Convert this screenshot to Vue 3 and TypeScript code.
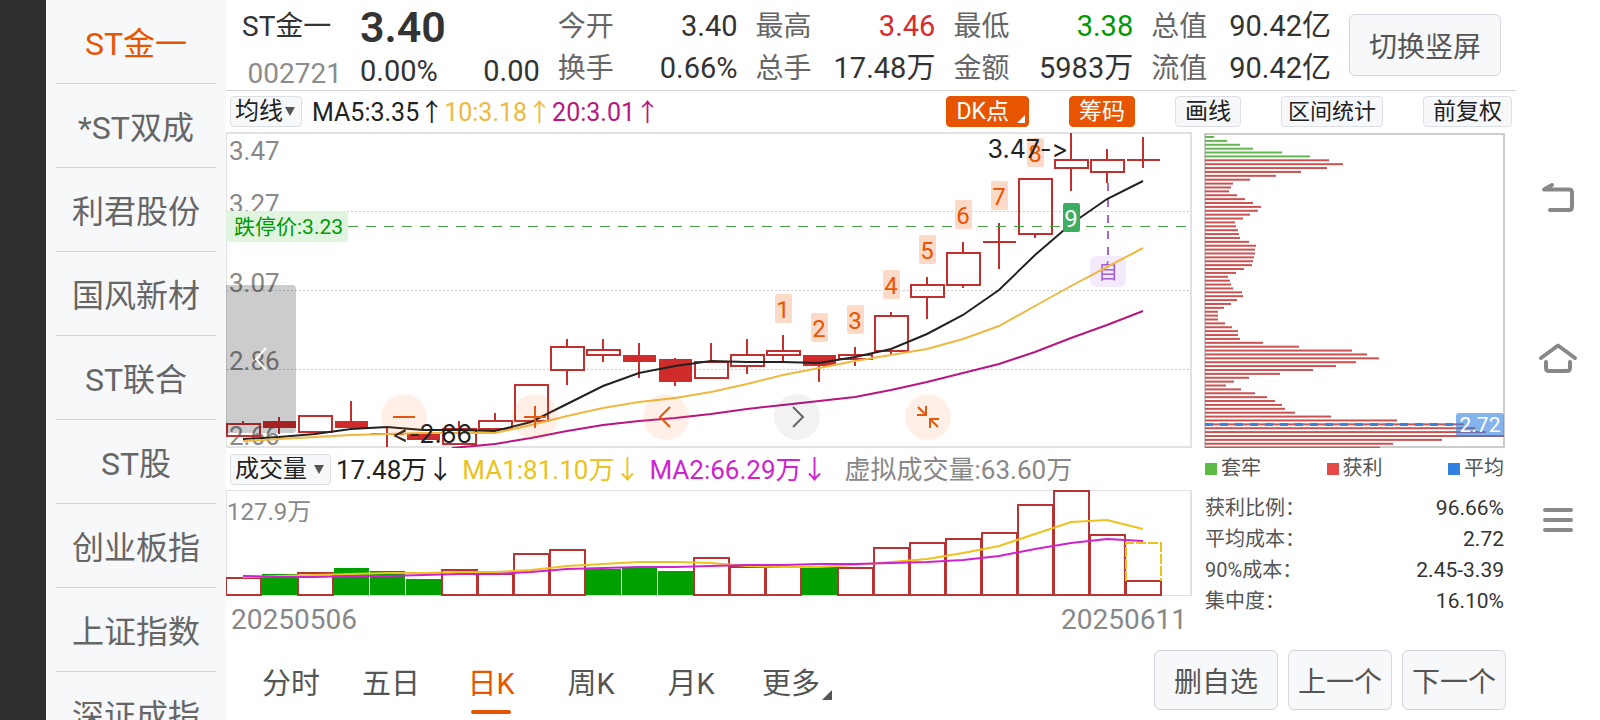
<script setup lang="ts">
import { ref } from 'vue'

type Kind = 'hollow' | 'solid' | 'cross'
type Candle = [kind: Kind, top: number, bottom: number, high: number, low: number]

const stocks = ['ST金一', '*ST双成', '利君股份', '国风新材', 'ST联合', 'ST股', '创业板指', '上证指数', '深证成指']
const activeStock = ref('ST金一')

const stats = [
  { rows: [{ label: '今开', value: '3.40', tone: '' }, { label: '换手', value: '0.66%', tone: '' }] },
  { rows: [{ label: '最高', value: '3.46', tone: 'up' }, { label: '总手', value: '17.48万', tone: '' }] },
  { rows: [{ label: '最低', value: '3.38', tone: 'down' }, { label: '金额', value: '5983万', tone: '' }] },
  { rows: [{ label: '总值', value: '90.42亿', tone: '' }, { label: '流值', value: '90.42亿', tone: '' }] },
]

const periods = ['分时', '五日', '日K', '周K', '月K', '更多']
const activePeriod = ref('日K')

const STEP = 36
const cx = (i: number): number => 17 + STEP * i
const toPoints = (ys: number[], first = 0): string => ys.map((y, i) => `${cx(i + first)},${y}`).join(' ')

const candles: Candle[] = [
  ['hollow', 292, 304, 289, 304], ['solid', 289, 296, 285, 302], ['hollow', 284, 300, 284, 303],
  ['solid', 289, 296, 269, 296], ['cross', 302, 302, 296, 315], ['solid', 301, 308, 301, 308],
  ['hollow', 297, 312, 289, 312], ['hollow', 289, 297, 281, 297], ['hollow', 253, 289, 253, 289],
  ['hollow', 215, 238, 207, 253], ['hollow', 218, 223, 207, 230], ['solid', 223, 230, 211, 246],
  ['solid', 227, 250, 226, 254], ['hollow', 230, 246, 211, 246], ['hollow', 223, 234, 207, 242],
  ['hollow', 219, 223, 203, 230], ['solid', 223, 234, 223, 250], ['hollow', 223, 227, 215, 234],
  ['hollow', 184, 219, 180, 222], ['hollow', 153, 165, 145, 187], ['hollow', 121, 153, 110, 156],
  ['cross', 110, 110, 91, 137], ['hollow', 47, 102, 47, 106], ['hollow', 28, 36, 1, 59],
  ['hollow', 28, 40, 17, 51], ['cross', 28, 28, 5, 36],
]

const ma5 = toPoints([307, 305, 302, 297, 295, 298, 298, 299, 290, 272, 254, 241, 234, 229, 230, 230, 231, 225, 217, 202, 183, 158, 123, 92, 67, 49])
const ma10 = toPoints([309, 307, 305, 303, 302, 301, 301, 301, 293, 284, 276, 270, 266, 260, 252, 243, 236, 229, 223, 217, 207, 194, 174, 154, 135, 116])
const ma20 = `226,316 ${toPoints([312, 306, 299, 293, 289, 286, 282, 277, 273, 269, 265, 258, 250, 241, 232, 220, 206, 193, 179], 7)}`

const badges = [
  { n: 1, i: 15, y: 162 }, { n: 2, i: 16, y: 181 }, { n: 3, i: 17, y: 173 }, { n: 4, i: 18, y: 138 },
  { n: 5, i: 19, y: 103 }, { n: 6, i: 20, y: 68 }, { n: 7, i: 21, y: 49 }, { n: 8, i: 22, y: 6 },
]

const axis = [
  { text: '3.47', y: 28 }, { text: '3.27', y: 81 }, { text: '3.07', y: 160 },
  { text: '2.86', y: 238 }, { text: '2.66', y: 313 },
]

const volumeTops = [88, 84, 83, 78, 81, 89, 80, 84, 64, 60, 79, 78, 81, 68, 77, 77, 77, 78, 58, 53, 49, 43, 15, 1, 45, 91]
const fallingDays = new Set([1, 3, 4, 5, 10, 11, 12, 16])
const volMa1 = toPoints([87, 86, 85, 84, 83, 83, 82, 82, 80, 76, 74, 72, 72, 73, 76, 77, 77, 75, 72, 69, 63, 56, 44, 32, 30, 39])
const volMa2 = toPoints([86, 87, 87, 86, 86, 85, 84, 84, 82, 79, 78, 77, 77, 76, 75, 75, 74, 74, 73, 72, 70, 66, 59, 53, 49, 51])

const CHIP_GAP = 3.883
const chips = [
  9, 22, 35, 48, 77, 105, 124, 138, 122, 96, 71, 45, 28, 26, 24, 32, 40, 48, 56, 53, 45, 38, 30, 31, 33, 34, 35,
  44, 51, 50, 50, 49, 48, 47, 39, 31, 23, 25, 26, 28, 37, 38, 32, 26, 19, 13, 13, 13, 20, 27, 33, 33, 35, 58, 94,
  147, 162, 174, 151, 131, 108, 75, 44, 29, 21, 36, 50, 62, 70, 77, 80, 90, 126, 192, 259, 270, 281, 299, 237, 188, 175,
]

const chipLegend = [
  { label: '套牢', tone: 'trapped' }, { label: '获利', tone: 'profit' }, { label: '平均', tone: 'average' },
]
const chipRows = [
  ['获利比例：', '96.66%'], ['平均成本：', '2.72'], ['90%成本：', '2.45-3.39'], ['集中度：', '16.10%'],
]
</script>

<template>
  <div class="screen" lang="zh-CN">
    <div class="bezel"></div>

    <nav class="watchlist" aria-label="自选">
      <button
        v-for="s in stocks" :key="s" type="button" class="stock"
        :class="{ active: s === activeStock }" @click="activeStock = s"
      >{{ s }}</button>
    </nav>

    <main class="main">
      <header class="quote">
        <div class="name-col">
          <h1 class="name">ST金一</h1>
          <span class="code">002721</span>
        </div>
        <div class="price-col">
          <strong class="price">3.40</strong>
          <div class="change"><span>0.00%</span><span>0.00</span></div>
        </div>
        <dl v-for="(c, k) in stats" :key="k" class="stat">
          <div v-for="r in c.rows" :key="r.label" class="stat-row">
            <dt>{{ r.label }}</dt><dd :class="r.tone">{{ r.value }}</dd>
          </div>
        </dl>
        <button type="button" class="soft-btn rotate">切换竖屏</button>
      </header>

      <div class="toolbar">
        <label class="picker">
          <select aria-label="主图指标"><option>均线</option></select>
          <svg class="caret" viewBox="0 0 10 9"><path d="M0 0H10L5 9Z" /></svg>
        </label>
        <span class="ma c-black">MA5:3.35↑</span>
        <span class="ma c-amber">10:3.18↑</span>
        <span class="ma c-magenta">20:3.01↑</span>
        <div class="tools">
          <button type="button" class="tool hot dk">DK点<svg class="corner" viewBox="0 0 8 8"><path d="M8 0V8H0Z" /></svg></button>
          <button type="button" class="tool hot">筹码</button>
          <button type="button" class="tool">画线</button>
          <button type="button" class="tool compact">区间统计</button>
          <button type="button" class="tool">前复权</button>
        </div>
      </div>

      <div class="panels">
        <section class="left">
          <div class="kline">
            <svg viewBox="0 0 966 316" role="img" aria-label="日K线图">
              <rect class="frame" x="0" y="1" width="965" height="314" />
              <line v-for="y in [79, 158, 237]" :key="y" class="grid" x1="1" x2="964" :y1="y + 0.5" :y2="y + 0.5" />
              <text v-for="a in axis" :key="a.text" class="axis" x="3" :y="a.y">{{ a.text }}</text>
              <g v-for="(c, i) in candles" :key="i" class="candle">
                <line v-if="c[3] < c[1]" :x1="cx(i)" :x2="cx(i)" :y1="c[3]" :y2="c[1]" />
                <line v-if="c[4] > c[2]" :x1="cx(i)" :x2="cx(i)" :y1="c[2]" :y2="c[4]" />
                <line v-if="c[0] === 'cross'" :x1="cx(i) - 16" :x2="cx(i) + 17" :y1="c[1]" :y2="c[1]" />
                <rect v-else-if="c[0] === 'solid'" class="fill" :x="cx(i) - 16" :y="c[1]" width="33" :height="c[2] - c[1]" />
                <rect v-else :x="cx(i) - 16" :y="c[1]" width="33" :height="c[2] - c[1]" />
              </g>
              <line class="limit" x1="122" x2="964" y1="94.5" y2="94.5" />
              <rect class="limit-tag" x="0" y="79" width="122" height="31" rx="3" />
              <text class="limit-text" x="8" y="102">跌停价:3.23</text>
              <line class="own-line" x1="882" x2="882" y1="51" y2="130" />
              <rect class="own-tag" x="864" y="124" width="36" height="31" rx="6" />
              <text class="own-text" x="882" y="147">自</text>
              <g v-for="b in badges" :key="b.n" class="badge">
                <rect :x="cx(b.i) - 8" :y="b.y" width="17" height="29" rx="2" />
                <text :x="cx(b.i)" :y="b.y + 24">{{ b.n }}</text>
              </g>
              <polyline class="line s-black" :points="ma5" />
              <polyline class="line s-amber" :points="ma10" />
              <polyline class="line s-magenta" :points="ma20" />
              <g class="badge nine">
                <rect :x="cx(23) - 8" y="71" width="17" height="29" rx="2" />
                <text :x="cx(23)" y="95">9</text>
              </g>
              <text class="mark" x="842" y="26" text-anchor="end">3.47-&gt;</text>
              <text class="mark" x="166" y="311">&lt;-2.66</text>
            </svg>
            <button type="button" class="drawer" aria-label="展开">
              <svg viewBox="0 0 12 24"><path d="M11 1L1 12L11 23" /></svg>
            </button>
            <div class="controls">
              <button type="button" class="round" aria-label="缩小"><svg viewBox="0 0 46 46"><path d="M12 23H34" /></svg></button>
              <button type="button" class="round" aria-label="放大"><svg viewBox="0 0 46 46"><path d="M12 23H34M23 12V34" /></svg></button>
              <button type="button" class="round" aria-label="左移"><svg viewBox="0 0 46 46"><path d="M27 13L17 23L27 33" /></svg></button>
              <button type="button" class="round gray" aria-label="右移"><svg viewBox="0 0 46 46"><path d="M19 13L29 23L19 33" /></svg></button>
              <button type="button" class="round" aria-label="收起"><svg viewBox="0 0 46 46"><path d="M13 13L21 21M12 21H21V12M33 33L25 25M34 25H25V34" /></svg></button>
            </div>
          </div>

          <div class="vol-legend">
            <label class="picker wide">
              <select aria-label="副图指标"><option>成交量</option></select>
              <svg class="caret" viewBox="0 0 10 9"><path d="M0 0H10L5 9Z" /></svg>
            </label>
            <span class="vol c-black">17.48万↓</span>
            <span class="vol c-gold">MA1:81.10万↓</span>
            <span class="vol c-violet">MA2:66.29万↓</span>
            <span class="vol forecast c-gray">虚拟成交量:63.60万</span>
          </div>

          <svg class="volume" viewBox="0 0 966 106" role="img" aria-label="成交量图">
            <rect class="frame" x="0" y="0" width="965" height="106" />
            <text class="axis small" x="1" y="30">127.9万</text>
            <g v-for="(t, i) in volumeTops" :key="i">
              <rect v-if="fallingDays.has(i)" class="vol-down" :x="36 * i" :y="t" width="35" :height="105 - t" />
              <rect v-else class="vol-up" :x="36 * i" :y="t" width="35" :height="105 - t" />
            </g>
            <path class="virtual" d="M900 91V53H935V91" />
            <polyline class="line s-gold" :points="volMa1" />
            <polyline class="line s-violet" :points="volMa2" />
          </svg>
          <div class="dates"><time datetime="2025-05-06">20250506</time><time datetime="2025-06-11">20250611</time></div>
        </section>

        <section class="right">
          <svg class="chips" viewBox="0 0 302 316" role="img" aria-label="筹码分布">
            <rect class="chip-frame" x="1" y="2" width="299" height="313" />
            <rect
              v-for="(w, i) in chips" :key="i" :class="i < 6 ? 'chip-trapped' : 'chip-profit'"
              x="1" :y="4 + CHIP_GAP * i" :width="w" height="2"
            />
            <line class="avg" x1="1" x2="252" y1="292.5" y2="292.5" />
            <rect class="avg-tag" x="252" y="281" width="48" height="24" rx="3" />
            <text class="avg-text" x="276" y="300">2.72</text>
          </svg>
          <ul class="chip-legend">
            <li v-for="l in chipLegend" :key="l.label"><i :class="l.tone"></i>{{ l.label }}</li>
          </ul>
          <dl class="chip-stats">
            <div v-for="r in chipRows" :key="r[0]"><dt>{{ r[0] }}</dt><dd>{{ r[1] }}</dd></div>
          </dl>
        </section>
      </div>

      <footer class="bottom">
        <nav class="tabs" aria-label="周期">
          <button
            v-for="p in periods" :key="p" type="button" class="tab"
            :class="{ active: p === activePeriod }" @click="activePeriod = p"
          >{{ p }}<svg v-if="p === '更多'" class="more" viewBox="0 0 10 10"><path d="M10 0V10H0Z" /></svg></button>
        </nav>
        <div class="actions">
          <button type="button" class="soft-btn action wide">删自选</button>
          <button type="button" class="soft-btn action">上一个</button>
          <button type="button" class="soft-btn action">下一个</button>
        </div>
      </footer>
    </main>

    <nav class="system" aria-label="系统导航">
      <button type="button" aria-label="返回"><svg viewBox="0 0 40 40"><path d="M14 5L6 9.500H31Q34 9.500 34 12.500V27Q34 30 31 30H12" /></svg></button>
      <button type="button" aria-label="主页"><svg viewBox="0 0 40 40"><path d="M3 18L20 5.500L37 18M8 22V28Q8 31 11 31H29Q32 31 32 28V22" /></svg></button>
      <button type="button" aria-label="菜单"><svg viewBox="0 0 40 40"><path d="M7 10H33M7 20H33M7 30H33" /></svg></button>
    </nav>
  </div>
</template>

<style>
body {
  margin: 0;
  background: #fff;
}
</style>

<style scoped>
.screen {
  display: grid;
  grid-template-columns: 46px 180px minmax(0, 1fr) 84px;
  height: 100vh;
  overflow: hidden;
  background: #fff;
  color: #333;
  font-family: Roboto, "Noto Sans CJK SC", sans-serif;
  font-size: 28px;
}
button, select {
  font: inherit;
  color: inherit;
  padding: 0;
  border: 0;
  background: none;
  cursor: pointer;
}
dl, dd, ul, h1 { margin: 0; padding: 0; }
svg { display: block; }
.bezel { background: #303030; }

.watchlist {
  display: flex;
  flex-direction: column;
  padding: 0 10px;
  background: #f7f8fa;
  overflow: hidden;
}
.stock {
  flex: none;
  height: 84px;
  padding-bottom: 2px;
  border-bottom: 1px solid #cfd2d9;
  color: #666;
  font-size: 32px;
  white-space: nowrap;
}
.stock.active { color: #e85500; }

.main {
  display: flex;
  flex-direction: column;
  min-width: 0;
}
.quote {
  display: flex;
  gap: 18px;
  height: 90px;
  padding: 0 15px 0 16px;
  border-bottom: 1px solid #d4d4d4;
  white-space: nowrap;
}
.name-col { width: 100px; }
.name {
  font-size: 28px;
  font-weight: 400;
  line-height: 54px;
}
.code {
  display: block;
  text-align: right;
  line-height: 40px;
  color: #8c8c8c;
}
.price-col { flex: 180 1 0; }
.price {
  display: block;
  font-size: 43px;
  font-weight: 600;
  line-height: 54px;
}
.change {
  display: flex;
  justify-content: space-between;
  font-size: 29px;
  line-height: 34px;
}
.stat {
  flex: 180 1 0;
  padding-top: 5px;
}
.stat-row {
  display: flex;
  align-items: baseline;
  justify-content: space-between;
  height: 42px;
  line-height: 42px;
}
.stat dt { color: #666; }
.stat dd { font-size: 29px; }
.up { color: #d92b2b; }
.down { color: #009a00; }
.soft-btn {
  border: 1px solid #d3d6dc;
  border-radius: 6px;
  background: #f7f8fa;
  color: #555;
  white-space: nowrap;
}
.rotate {
  width: 152px;
  height: 62px;
  margin-top: 14px;
}

.toolbar {
  display: flex;
  align-items: center;
  height: 41px;
  padding: 0 4px;
  font-size: 25px;
  white-space: nowrap;
}
.picker {
  position: relative;
  display: flex;
  align-items: center;
  box-sizing: border-box;
  width: 72px;
  height: 31px;
  margin-right: 10px;
  border: 1px solid #dcdfe4;
  border-radius: 4px;
  background: #f7f8fa;
  color: #222;
  font-size: 24px;
}
.picker.wide {
  width: 101px;
  margin-right: -4px;
}
.picker select {
  appearance: none;
  width: 100%;
  height: 29px;
  padding-left: 4px;
  line-height: 29px;
}
.caret {
  position: absolute;
  right: 6px;
  width: 10px;
  height: 9px;
  fill: #555;
  pointer-events: none;
}
.ma { padding-bottom: 4px; }
.tools {
  display: flex;
  gap: 40px;
  margin-left: auto;
  font-size: 23px;
}
.tool {
  position: relative;
  height: 31px;
  padding: 0 9px;
  border: 1px solid #dcdfe4;
  border-radius: 4px;
  background: #f7f8fa;
  color: #222;
  line-height: 29px;
}
.tool.compact {
  padding: 0 6px;
  font-size: 22px;
}
.tool.hot {
  border-color: #e85500;
  background: #e85500;
  color: #fff;
}
.tool.dk { padding-right: 19px; }
.corner {
  position: absolute;
  right: 3px;
  bottom: 3px;
  width: 8px;
  height: 8px;
  fill: #fff;
}

.c-black { color: #222; }
.c-amber { color: #f0b840; }
.c-magenta { color: #b81780; }
.c-gold { color: #ecc21c; }
.c-violet { color: #cf22cf; }
.c-gray { color: #888; }

.panels {
  display: grid;
  grid-template-columns: minmax(0, 966fr) minmax(0, 302fr);
  column-gap: 12px;
  padding-right: 10px;
}
.kline { position: relative; }
.frame {
  fill: none;
  stroke: #e2e2e2;
  stroke-width: 2;
}
.grid {
  stroke: #ccc;
  stroke-dasharray: 2 2;
}
.axis {
  fill: #888;
  font-size: 26px;
}
.axis.small { font-size: 24px; }
.candle {
  fill: none;
  stroke: #c1302f;
  stroke-width: 2;
}
.candle .fill {
  fill: #cf2b2b;
  stroke: none;
}
.line {
  fill: none;
  stroke-width: 2;
}
.s-black { stroke: #222; }
.s-amber { stroke: #f0b840; }
.s-magenta { stroke: #b81780; }
.s-gold { stroke: #ecc21c; }
.s-violet { stroke: #cf22cf; }
.limit {
  stroke: #46a046;
  stroke-dasharray: 10 8;
}
.limit-tag { fill: #e0f4e0; }
.limit-text {
  fill: #009a00;
  font-size: 21px;
}
.own-line {
  stroke: #a467c9;
  stroke-width: 2;
  stroke-dasharray: 8 8;
}
.own-tag { fill: #f3eafe; }
.own-text {
  fill: #a45fd0;
  font-size: 20px;
  text-anchor: middle;
}
.badge rect { fill: #fdd9c8; }
.badge text {
  fill: #e85500;
  font-size: 24px;
  text-anchor: middle;
}
.badge.nine rect { fill: #3cae5f; }
.badge.nine text { fill: #fff; }
.mark {
  fill: #222;
  font-family: Inter, Roboto, sans-serif;
  font-size: 25px;
  font-variant-ligatures: none;
  font-feature-settings: "calt" 0;
}

.drawer {
  position: absolute;
  left: 0;
  bottom: 15px;
  width: 70px;
  height: 148px;
  padding-left: 29px;
  border-radius: 0 4px 4px 0;
  background: rgba(0, 0, 0, 0.2);
}
.drawer svg {
  width: 12px;
  height: 24px;
  fill: none;
  stroke: #fff;
  stroke-width: 2;
}
.controls {
  position: absolute;
  left: 155px;
  bottom: 8px;
  display: flex;
  gap: 85px;
}
.round {
  width: 46px;
  height: 46px;
  border-radius: 50%;
  background: rgba(255, 100, 20, 0.1);
}
.round svg {
  fill: none;
  stroke: #e05a10;
  stroke-width: 2;
}
.round.gray { background: rgba(0, 0, 0, 0.05); }
.round.gray svg { stroke: #666; }

.vol-legend {
  display: flex;
  align-items: center;
  gap: 9px;
  height: 42px;
  padding-left: 4px;
  font-size: 26px;
  white-space: nowrap;
}
.vol { padding-bottom: 4px; }
.forecast { margin-left: 8px; }
.vol-down { fill: #00a000; }
.vol-up {
  fill: none;
  stroke: #b83434;
  stroke-width: 2;
}
.virtual {
  fill: none;
  stroke: #ecc21c;
  stroke-width: 2;
  stroke-dasharray: 10 2;
}
.dates {
  display: flex;
  justify-content: space-between;
  padding: 0 5px;
  color: #888;
  font-size: 28px;
  line-height: 48px;
}

.chip-frame {
  fill: none;
  stroke: #ccc;
  stroke-width: 2;
}
.chip-trapped { fill: #62b84c; }
.chip-profit { fill: #cc5252; }
.avg {
  stroke: #3a80e0;
  stroke-width: 3;
  stroke-dasharray: 8 7;
}
.avg-tag {
  fill: #3280e1;
  fill-opacity: 0.6;
}
.avg-text {
  fill: #fff;
  font-size: 21px;
  text-anchor: middle;
}
.chip-legend {
  display: flex;
  justify-content: space-between;
  padding: 0 2px 0 1px;
  list-style: none;
  color: #555;
  font-size: 20px;
  line-height: 41px;
}
.chip-legend li {
  display: flex;
  align-items: center;
  gap: 4px;
}
.chip-legend i {
  width: 12px;
  height: 12px;
}
.trapped { background: #5cb944; }
.profit { background: #e54a4a; }
.average { background: #3280e1; }
.chip-stats {
  padding: 4px 2px 0 1px;
  font-size: 20px;
  line-height: 31px;
}
.chip-stats div {
  display: flex;
  justify-content: space-between;
}
.chip-stats dt { color: #555; }
.chip-stats dd { font-size: 21px; }

.bottom {
  display: flex;
  justify-content: space-between;
  height: 70px;
  margin-top: auto;
  padding: 0 10px 0 15px;
  white-space: nowrap;
}
.tabs { display: flex; }
.tab {
  position: relative;
  width: 100px;
  padding-bottom: 9px;
  color: #555;
  font-size: 29px;
}
.tab.active { color: #e85500; }
.tab.active::after {
  content: "";
  position: absolute;
  left: 30px;
  right: 30px;
  bottom: 6px;
  height: 4px;
  border-radius: 2px;
  background: #e85500;
}
.more {
  position: absolute;
  right: 9px;
  bottom: 20px;
  width: 10px;
  height: 10px;
  fill: #555;
}
.actions {
  display: flex;
  gap: 10px;
}
.action {
  width: 104px;
  height: 60px;
}
.action.wide { width: 124px; }

.system {
  display: flex;
  flex-direction: column;
  align-items: center;
  justify-content: center;
  gap: 120px;
}
.system svg {
  width: 40px;
  height: 40px;
  fill: none;
  stroke: #888;
  stroke-width: 4;
  stroke-linecap: round;
  stroke-linejoin: round;
}
</style>
